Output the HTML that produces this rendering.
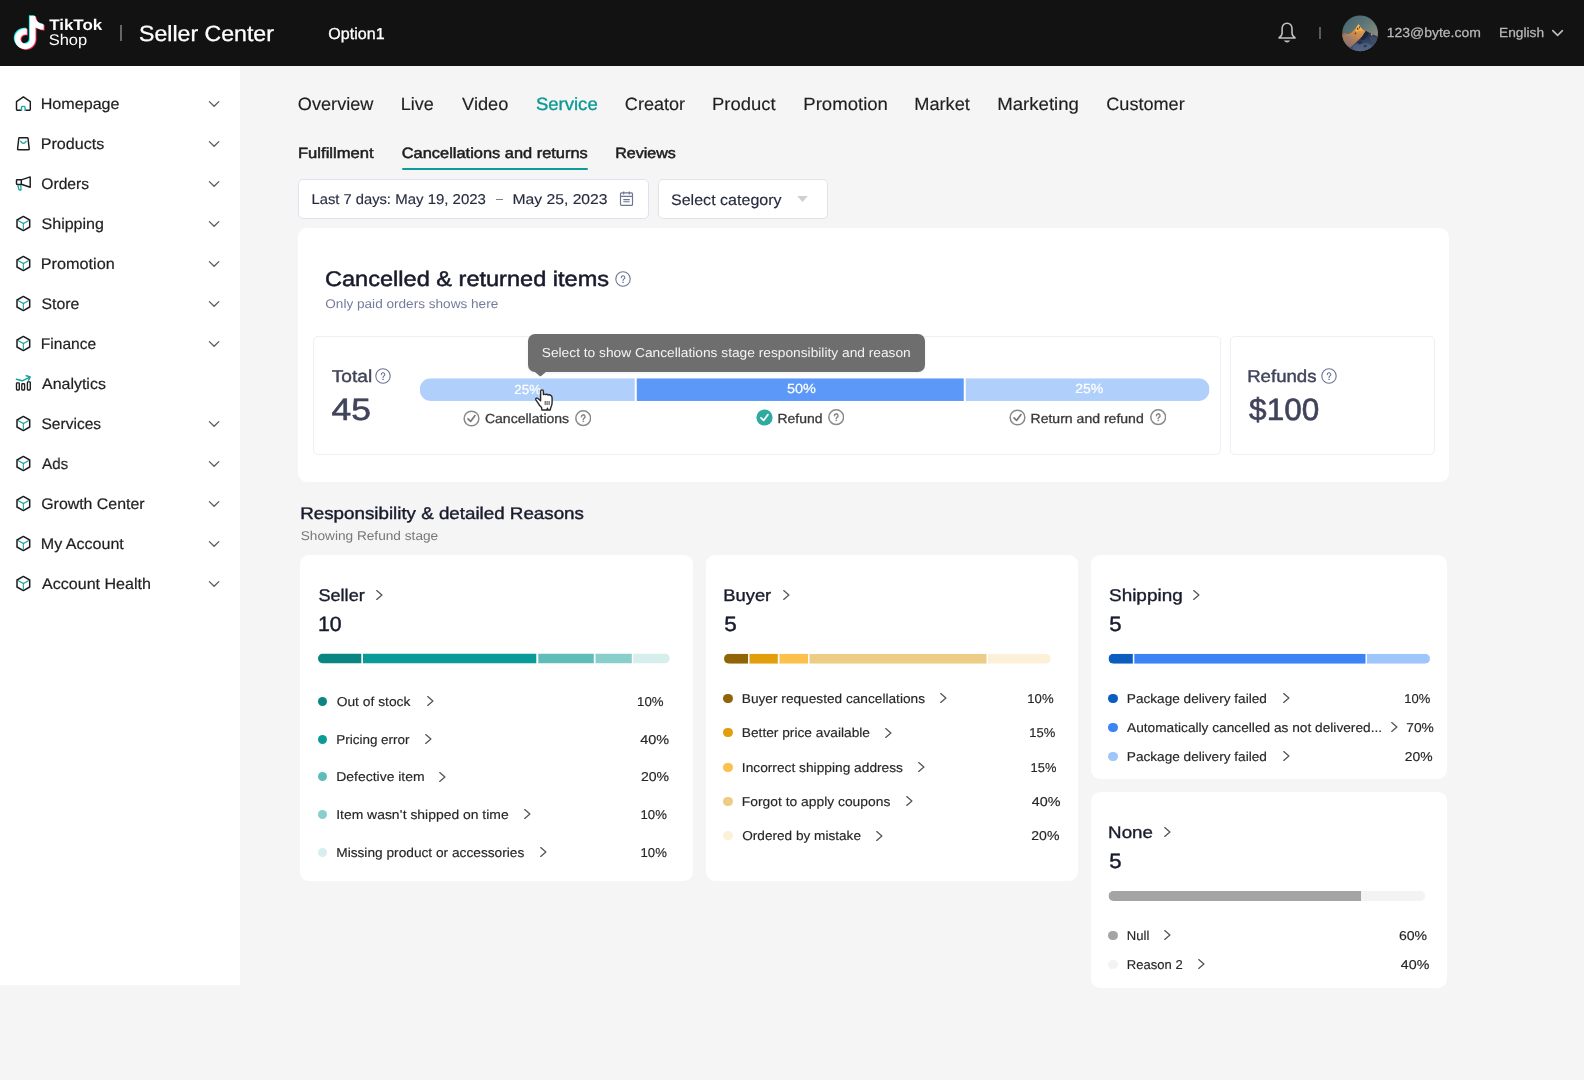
<!DOCTYPE html>
<html lang="en"><head><meta charset="utf-8"><title>Seller Center</title>
<style>
html,body{margin:0;padding:0}
body{width:1584px;height:1080px;position:relative;overflow:hidden;background:#f5f5f5;font-family:"Liberation Sans",sans-serif;text-rendering:geometricPrecision;}
body div,body svg{position:absolute}
.t{position:absolute;white-space:nowrap;line-height:1;will-change:transform;}
</style></head>
<body>
<div style="left:0px;top:0px;width:1584px;height:66px;background:#121212;"></div>
<div style="left:0px;top:66px;width:240px;height:919px;background:#ffffff;"></div>
<svg style="left:10px;top:12px" width="40" height="42" viewBox="0 0 40 42">
<g transform="translate(2.6,4) scale(1.383)"><path d="M12.525.02c1.31-.02 2.61-.01 3.91-.02.08 1.53.63 3.09 1.75 4.17 1.12 1.11 2.7 1.62 4.24 1.79v4.03c-1.44-.05-2.89-.35-4.2-.97-.57-.26-1.1-.59-1.62-.93-.01 2.92.01 5.84-.02 8.75-.08 1.4-.54 2.79-1.35 3.94-1.31 1.92-3.58 3.17-5.91 3.21-1.43.08-2.86-.31-4.08-1.03-2.02-1.19-3.44-3.37-3.65-5.71-.02-.5-.03-1-.01-1.49.18-1.9 1.12-3.72 2.58-4.96 1.66-1.44 3.98-2.13 6.15-1.72.02 1.48-.04 2.96-.04 4.44-.99-.32-2.15-.23-3.02.37-.63.41-1.11 1.04-1.36 1.75-.21.51-.15 1.07-.14 1.61.24 1.64 1.82 3.02 3.5 2.87 1.12-.01 2.19-.66 2.77-1.61.19-.33.4-.67.41-1.06.1-1.79.06-3.57.07-5.36.01-4.03-.01-8.05.02-12.07z" fill="#25f4ee" transform="translate(-0.7,-0.55)"/><path d="M12.525.02c1.31-.02 2.61-.01 3.91-.02.08 1.53.63 3.09 1.75 4.17 1.12 1.11 2.7 1.62 4.24 1.79v4.03c-1.44-.05-2.89-.35-4.2-.97-.57-.26-1.1-.59-1.62-.93-.01 2.92.01 5.84-.02 8.75-.08 1.4-.54 2.79-1.35 3.94-1.31 1.92-3.58 3.17-5.91 3.21-1.43.08-2.86-.31-4.08-1.03-2.02-1.19-3.44-3.37-3.65-5.71-.02-.5-.03-1-.01-1.49.18-1.9 1.12-3.72 2.58-4.96 1.66-1.44 3.98-2.13 6.15-1.72.02 1.48-.04 2.96-.04 4.44-.99-.32-2.15-.23-3.02.37-.63.41-1.11 1.04-1.36 1.75-.21.51-.15 1.07-.14 1.61.24 1.64 1.82 3.02 3.5 2.87 1.12-.01 2.19-.66 2.77-1.61.19-.33.4-.67.41-1.06.1-1.79.06-3.57.07-5.36.01-4.03-.01-8.05.02-12.07z" fill="#fe2c55" transform="translate(0.7,0.55)"/><path d="M12.525.02c1.31-.02 2.61-.01 3.91-.02.08 1.53.63 3.09 1.75 4.17 1.12 1.11 2.7 1.62 4.24 1.79v4.03c-1.44-.05-2.89-.35-4.2-.97-.57-.26-1.1-.59-1.62-.93-.01 2.92.01 5.84-.02 8.75-.08 1.4-.54 2.79-1.35 3.94-1.31 1.92-3.58 3.17-5.91 3.21-1.43.08-2.86-.31-4.08-1.03-2.02-1.19-3.44-3.37-3.65-5.71-.02-.5-.03-1-.01-1.49.18-1.9 1.12-3.72 2.58-4.96 1.66-1.44 3.98-2.13 6.15-1.72.02 1.48-.04 2.96-.04 4.44-.99-.32-2.15-.23-3.02.37-.63.41-1.11 1.04-1.36 1.75-.21.51-.15 1.07-.14 1.61.24 1.64 1.82 3.02 3.5 2.87 1.12-.01 2.19-.66 2.77-1.61.19-.33.4-.67.41-1.06.1-1.79.06-3.57.07-5.36.01-4.03-.01-8.05.02-12.07z" fill="#ffffff"/></g></svg>
<div style="left:120px;top:24.5px;width:1.6px;height:16.5px;background:#666;"></div>
<svg style="left:1276px;top:21px" width="22" height="24" viewBox="0 0 22 24" fill="none" stroke="#c2c2c2" stroke-width="1.55" stroke-linejoin="round">
<path d="M11.05 2.3 C8 2.3 6.1 4.5 6.1 7.5 V12 C6.1 14 5.2 15.4 3 16.9 H19.1 C16.9 15.4 16 14 16 12 V7.5 C16 4.5 14.1 2.3 11.05 2.3Z"/><path d="M7.7 19.5 H14.4 Q11.05 23.6 7.7 19.5Z" fill="#c2c2c2" stroke="none"/></svg>
<div style="left:1319px;top:26.8px;width:2px;height:12px;background:#5a5a5a;"></div>
<svg style="left:1342px;top:14.5px" width="37" height="37" viewBox="0 0 37 37">
<defs><clipPath id="av"><circle cx="18.1" cy="18.3" r="17.9"/></clipPath>
<linearGradient id="sky" x1="0.15" y1="0" x2="0.75" y2="0.65"><stop offset="0" stop-color="#476570"/><stop offset="0.5" stop-color="#5a7478"/><stop offset="1" stop-color="#858b7c"/></linearGradient>
<linearGradient id="sun" x1="0.75" y1="0" x2="0.2" y2="1"><stop offset="0" stop-color="#eeaa4c"/><stop offset="0.35" stop-color="#cf8e4c"/><stop offset="0.7" stop-color="#a87a60"/><stop offset="1" stop-color="#7a6a6c"/></linearGradient>
<linearGradient id="shd" x1="0.3" y1="0" x2="0.45" y2="1"><stop offset="0" stop-color="#162038"/><stop offset="0.5" stop-color="#2a3855"/><stop offset="1" stop-color="#52647f"/></linearGradient>
<filter id="bl" x="-10%" y="-10%" width="120%" height="120%"><feGaussianBlur stdDeviation="0.45"/></filter></defs>
<g clip-path="url(#av)"><rect width="37" height="37" fill="url(#sky)"/>
<g filter="url(#bl)">
<path d="M-1 20 L0.3 19.4 L2.4 17.9 L4.6 18.9 L6.6 18.7 L9.2 17.6 L11.6 15.2 L13.9 12.5 L16.4 9.3 L17.7 10.6 L19 12.5 L21.2 14.4 L23.7 15.9 L26.4 17.3 L29.2 18.5 L31.6 19.8 L34.3 21.1 L38 22.4 V38 H-1Z" fill="url(#shd)"/>
<path d="M-1 20 L0.3 19.4 L2.4 17.9 L4.6 18.9 L6.6 18.7 L9.2 17.6 L11.6 15.2 L13.9 12.5 L16.4 9.3 L17.7 10.6 L19 12.5 L21.2 14.4 L23.7 15.9 L21.8 18.8 L19.9 21.9 L17 24.6 L14.3 27 L12 29.2 L10.1 30.9 L8.4 32.6 L3 30 L-1 26Z" fill="url(#sun)"/>
<path d="M16.4 9.3 L17.7 10.6 L18.6 12.4 L20.4 14.2 L19.6 16.2 L17.2 15.4 L15 17 L13.6 15 L14.6 12Z" fill="#f2b656"/>
<path d="M15.2 12.6 L16.6 13.2 L16.2 15 L14.9 14.6Z M17 11 L18 12 L17.8 13.6 L17 13Z M13 17.4 L14.4 17.8 L13.8 19.6 L12.6 19Z" fill="#5b3f28"/>
<path d="M3.6 21.6 L7.4 21.8 L7.8 23.6 L4.4 24.2Z M7.6 24.6 L10.4 24.4 L10 26.4 L7.8 26.6Z" fill="#7d8094" opacity="0.8"/>
<path d="M0 19.6 L2.4 18 L4.4 19 L4 21 L0.5 22Z" fill="#a27250" opacity="0.8"/>
<path d="M23.7 15.9 L26.4 17.3 L25.6 21 L22.4 24.4 L19.4 25.4 L18.4 23.4 L21 20.4Z" fill="#18233b" opacity="0.8"/>
<path d="M29 18.5 L30.6 19.2 L30.4 20.6 L28.8 20.2Z" fill="#dfa56a"/>
<path d="M27 22 L31 21 L35 23 L34 27 L29 27Z" fill="#43536f" opacity="0.7"/>
<path d="M11 31 L15 28.4 L19 29.6 L24 28 L29 30 L30 38 H12Z" fill="#56688a" opacity="0.7"/>
<path d="M15 27 L18.6 25.6 L20.6 27.4 L17.4 29.4Z M21.4 30.4 L24.4 29.6 L25 31.6 L22.4 32.4Z" fill="#1e2a44" opacity="0.7"/>
</g></g></svg>
<svg style="left:1550px;top:28px" width="15" height="10" viewBox="0 0 15 10" fill="none" stroke="#bdbdbd" stroke-width="1.6" stroke-linecap="round" stroke-linejoin="round"><path d="M2.8 2.6 L7.6 7.4 L12.4 2.6"/></svg>
<svg style="left:15px;top:95px" width="18" height="18" viewBox="0 0 18 18"><path d="M1.5 6.6 L8.4 1.9 L15.3 6.6 V14.6 Q15.3 15.3 14.6 15.3 H10.9 M5.9 15.3 H2.2 Q1.5 15.3 1.5 14.6 V6.6" stroke="#1d1d1d" stroke-width="1.45" stroke-linejoin="round" stroke-linecap="round" fill="none"/><path d="M6.5 15.9 V12.4 Q6.5 11.4 7.5 11.4 H9.1 Q10.1 11.4 10.1 12.4 V15.9" stroke="#1aa3a0" stroke-width="1.35" fill="none"/></svg>
<svg style="left:207px;top:99px" width="14" height="10" viewBox="0 0 14 10" fill="none" stroke="#5a5a5a" stroke-width="1.3" stroke-linecap="round" stroke-linejoin="round"><path d="M2.4 2.6 L7.1 7.3 L11.8 2.6"/></svg>
<svg style="left:15px;top:135px" width="18" height="18" viewBox="0 0 18 18"><path d="M4.5 2.8 H12.3 Q12.9 2.8 13 3.4 L14.2 13.9 Q14.3 14.7 13.5 14.7 H3.3 Q2.5 14.7 2.6 13.9 L3.8 3.4 Q3.9 2.8 4.5 2.8Z" stroke="#1d1d1d" stroke-width="1.45" stroke-linejoin="round" fill="none"/><path d="M5.8 6.3 Q8.4 10.4 11 6.3" stroke="#1aa3a0" stroke-width="1.4" stroke-linecap="round" fill="none"/></svg>
<svg style="left:207px;top:139px" width="14" height="10" viewBox="0 0 14 10" fill="none" stroke="#5a5a5a" stroke-width="1.3" stroke-linecap="round" stroke-linejoin="round"><path d="M2.4 2.6 L7.1 7.3 L11.8 2.6"/></svg>
<svg style="left:15px;top:175px" width="18" height="18" viewBox="0 0 18 18"><path d="M6.3 4.9 L15.2 1.9 V12.3 L6.3 9.3 M6.3 4.7 H2.2 Q1.5 4.7 1.5 5.4 V8.7 Q1.5 9.4 2.2 9.4 H6.3Z" stroke="#1d1d1d" stroke-width="1.45" stroke-linejoin="round" fill="none"/><path d="M2.9 10 L3.8 14.4 Q3.9 15 4.5 15 H5.5 Q6.2 15 6.1 14.3 L5.7 10" stroke="#1aa3a0" stroke-width="1.3" fill="none"/></svg>
<svg style="left:207px;top:179px" width="14" height="10" viewBox="0 0 14 10" fill="none" stroke="#5a5a5a" stroke-width="1.3" stroke-linecap="round" stroke-linejoin="round"><path d="M2.4 2.6 L7.1 7.3 L11.8 2.6"/></svg>
<svg style="left:15px;top:215px" width="18" height="18" viewBox="0 0 18 18"><path d="M8.35 1.4 L14.7 5 V12 L8.35 15.6 L2 12 V5Z" stroke="#1d1d1d" stroke-width="1.5" stroke-linejoin="round" fill="none"/><path d="M2.9 5.5 L8.35 8.5 L13.8 5.5 M8.35 8.5 V15" stroke="#1aa3a0" stroke-width="1.1" fill="none"/></svg>
<svg style="left:207px;top:219px" width="14" height="10" viewBox="0 0 14 10" fill="none" stroke="#5a5a5a" stroke-width="1.3" stroke-linecap="round" stroke-linejoin="round"><path d="M2.4 2.6 L7.1 7.3 L11.8 2.6"/></svg>
<svg style="left:15px;top:255px" width="18" height="18" viewBox="0 0 18 18"><path d="M8.35 1.4 L14.7 5 V12 L8.35 15.6 L2 12 V5Z" stroke="#1d1d1d" stroke-width="1.5" stroke-linejoin="round" fill="none"/><path d="M2.9 5.5 L8.35 8.5 L13.8 5.5 M8.35 8.5 V15" stroke="#1aa3a0" stroke-width="1.1" fill="none"/></svg>
<svg style="left:207px;top:259px" width="14" height="10" viewBox="0 0 14 10" fill="none" stroke="#5a5a5a" stroke-width="1.3" stroke-linecap="round" stroke-linejoin="round"><path d="M2.4 2.6 L7.1 7.3 L11.8 2.6"/></svg>
<svg style="left:15px;top:295px" width="18" height="18" viewBox="0 0 18 18"><path d="M8.35 1.4 L14.7 5 V12 L8.35 15.6 L2 12 V5Z" stroke="#1d1d1d" stroke-width="1.5" stroke-linejoin="round" fill="none"/><path d="M2.9 5.5 L8.35 8.5 L13.8 5.5 M8.35 8.5 V15" stroke="#1aa3a0" stroke-width="1.1" fill="none"/></svg>
<svg style="left:207px;top:299px" width="14" height="10" viewBox="0 0 14 10" fill="none" stroke="#5a5a5a" stroke-width="1.3" stroke-linecap="round" stroke-linejoin="round"><path d="M2.4 2.6 L7.1 7.3 L11.8 2.6"/></svg>
<svg style="left:15px;top:335px" width="18" height="18" viewBox="0 0 18 18"><path d="M8.35 1.4 L14.7 5 V12 L8.35 15.6 L2 12 V5Z" stroke="#1d1d1d" stroke-width="1.5" stroke-linejoin="round" fill="none"/><path d="M2.9 5.5 L8.35 8.5 L13.8 5.5 M8.35 8.5 V15" stroke="#1aa3a0" stroke-width="1.1" fill="none"/></svg>
<svg style="left:207px;top:339px" width="14" height="10" viewBox="0 0 14 10" fill="none" stroke="#5a5a5a" stroke-width="1.3" stroke-linecap="round" stroke-linejoin="round"><path d="M2.4 2.6 L7.1 7.3 L11.8 2.6"/></svg>
<svg style="left:15px;top:375px" width="18" height="18" viewBox="0 0 18 18"><rect x="1.5" y="7.9" width="2.8" height="7.1" rx="0.7" stroke="#1d1d1d" stroke-width="1.35" fill="none"/><rect x="6.8" y="8.7" width="2.8" height="6.3" rx="0.7" stroke="#1d1d1d" stroke-width="1.35" fill="none"/><rect x="12.4" y="6.8" width="2.9" height="8.2" rx="0.7" stroke="#1d1d1d" stroke-width="1.35" fill="none"/><path d="M1.5 4.3 L7.2 5.8 L14.4 2.3 M11.3 0.7 L15.2 1.9 L13.6 5.3" stroke="#14a09c" stroke-width="1.5" stroke-linecap="round" stroke-linejoin="round" fill="none"/></svg>
<svg style="left:15px;top:415px" width="18" height="18" viewBox="0 0 18 18"><path d="M8.35 1.4 L14.7 5 V12 L8.35 15.6 L2 12 V5Z" stroke="#1d1d1d" stroke-width="1.5" stroke-linejoin="round" fill="none"/><path d="M2.9 5.5 L8.35 8.5 L13.8 5.5 M8.35 8.5 V15" stroke="#1aa3a0" stroke-width="1.1" fill="none"/></svg>
<svg style="left:207px;top:419px" width="14" height="10" viewBox="0 0 14 10" fill="none" stroke="#5a5a5a" stroke-width="1.3" stroke-linecap="round" stroke-linejoin="round"><path d="M2.4 2.6 L7.1 7.3 L11.8 2.6"/></svg>
<svg style="left:15px;top:455px" width="18" height="18" viewBox="0 0 18 18"><path d="M8.35 1.4 L14.7 5 V12 L8.35 15.6 L2 12 V5Z" stroke="#1d1d1d" stroke-width="1.5" stroke-linejoin="round" fill="none"/><path d="M2.9 5.5 L8.35 8.5 L13.8 5.5 M8.35 8.5 V15" stroke="#1aa3a0" stroke-width="1.1" fill="none"/></svg>
<svg style="left:207px;top:459px" width="14" height="10" viewBox="0 0 14 10" fill="none" stroke="#5a5a5a" stroke-width="1.3" stroke-linecap="round" stroke-linejoin="round"><path d="M2.4 2.6 L7.1 7.3 L11.8 2.6"/></svg>
<svg style="left:15px;top:495px" width="18" height="18" viewBox="0 0 18 18"><path d="M8.35 1.4 L14.7 5 V12 L8.35 15.6 L2 12 V5Z" stroke="#1d1d1d" stroke-width="1.5" stroke-linejoin="round" fill="none"/><path d="M2.9 5.5 L8.35 8.5 L13.8 5.5 M8.35 8.5 V15" stroke="#1aa3a0" stroke-width="1.1" fill="none"/></svg>
<svg style="left:207px;top:499px" width="14" height="10" viewBox="0 0 14 10" fill="none" stroke="#5a5a5a" stroke-width="1.3" stroke-linecap="round" stroke-linejoin="round"><path d="M2.4 2.6 L7.1 7.3 L11.8 2.6"/></svg>
<svg style="left:15px;top:535px" width="18" height="18" viewBox="0 0 18 18"><path d="M8.35 1.4 L14.7 5 V12 L8.35 15.6 L2 12 V5Z" stroke="#1d1d1d" stroke-width="1.5" stroke-linejoin="round" fill="none"/><path d="M2.9 5.5 L8.35 8.5 L13.8 5.5 M8.35 8.5 V15" stroke="#1aa3a0" stroke-width="1.1" fill="none"/></svg>
<svg style="left:207px;top:539px" width="14" height="10" viewBox="0 0 14 10" fill="none" stroke="#5a5a5a" stroke-width="1.3" stroke-linecap="round" stroke-linejoin="round"><path d="M2.4 2.6 L7.1 7.3 L11.8 2.6"/></svg>
<svg style="left:15px;top:575px" width="18" height="18" viewBox="0 0 18 18"><path d="M8.35 1.4 L14.7 5 V12 L8.35 15.6 L2 12 V5Z" stroke="#1d1d1d" stroke-width="1.5" stroke-linejoin="round" fill="none"/><path d="M2.9 5.5 L8.35 8.5 L13.8 5.5 M8.35 8.5 V15" stroke="#1aa3a0" stroke-width="1.1" fill="none"/></svg>
<svg style="left:207px;top:579px" width="14" height="10" viewBox="0 0 14 10" fill="none" stroke="#5a5a5a" stroke-width="1.3" stroke-linecap="round" stroke-linejoin="round"><path d="M2.4 2.6 L7.1 7.3 L11.8 2.6"/></svg>
<div style="left:401.6px;top:167.8px;width:186.8px;height:2.4px;background:#0f9c97;border-radius:1.2px;"></div>
<div style="left:298px;top:179px;width:349px;height:38px;background:#fff;border:1px solid #dde2f0;border-radius:5px;"></div>
<div style="left:496.2px;top:198.6px;width:7.2px;height:1.2px;background:#7a7f92;"></div>
<svg style="left:619px;top:189.8px" width="15" height="17" viewBox="0 0 15 17" fill="none" stroke="#6f7590" stroke-width="1.15"><rect x="1.5" y="2.9" width="12" height="12.5" rx="1"/><path d="M4.7 1.4 V4.4 M10.3 1.4 V4.4 M1.5 6.4 H13.5 M4.3 9.6 H10.7 M4.3 11.7 H10.7"/></svg>
<div style="left:658px;top:179px;width:167.5px;height:38px;background:#fff;border:1px solid #e3e3e6;border-radius:5px;"></div>
<svg style="left:796px;top:195px" width="13" height="8" viewBox="0 0 13 8"><path d="M1.2 1.1 H11.8 L6.5 7Z" fill="#cfcfd2"/></svg>
<div style="left:298px;top:228px;width:1151px;height:253.5px;background:#fff;border-radius:9px;"></div>
<svg style="left:615.3px;top:271.0px" width="16" height="16" viewBox="0 0 16 16" fill="none" stroke="#6d7396" stroke-width="1.1" stroke-linecap="round"><circle cx="8" cy="8" r="7.2"/><path d="M6.3 6.6 A1.75 1.75 0 1 1 8.8 8.1 Q8 8.6 8 9.5" stroke-width="1.1"/><circle cx="8" cy="11.3" r="0.5" fill="#6d7396" stroke-width="0.45"/></svg>
<div style="left:313px;top:336px;width:906px;height:116.5px;background:#fff;border:1px solid #eeeff5;border-radius:5px;"></div>
<div style="left:1230px;top:336px;width:202.5px;height:116.5px;background:#fff;border:1px solid #eeeff5;border-radius:5px;"></div>
<svg style="left:375.3px;top:367.8px" width="16" height="16" viewBox="0 0 16 16" fill="none" stroke="#6d7396" stroke-width="1.1" stroke-linecap="round"><circle cx="8" cy="8" r="7.2"/><path d="M6.3 6.6 A1.75 1.75 0 1 1 8.8 8.1 Q8 8.6 8 9.5" stroke-width="1.1"/><circle cx="8" cy="11.3" r="0.5" fill="#6d7396" stroke-width="0.45"/></svg>
<svg style="left:1320.8px;top:367.8px" width="16" height="16" viewBox="0 0 16 16" fill="none" stroke="#6d7396" stroke-width="1.1" stroke-linecap="round"><circle cx="8" cy="8" r="7.2"/><path d="M6.3 6.6 A1.75 1.75 0 1 1 8.8 8.1 Q8 8.6 8 9.5" stroke-width="1.1"/><circle cx="8" cy="11.3" r="0.5" fill="#6d7396" stroke-width="0.45"/></svg>
<svg style="left:418px;top:377px" width="793" height="25" viewBox="0 0 793 25"><defs><clipPath id="bc1"><rect x="1.75" y="1.25" width="789.75" height="22.7" rx="11.1"/></clipPath></defs><g clip-path="url(#bc1)"><rect x="1.75" y="1.25" width="215.00" height="22.7" fill="#b0d0fb"/><rect x="218.75" y="1.25" width="327.00" height="22.7" fill="#5c98f8"/><rect x="547.75" y="1.25" width="243.75" height="22.7" fill="#b0d0fb"/></g></svg>
<svg style="left:462.6px;top:410.4px" width="17" height="17" viewBox="0 0 17 17" fill="none" stroke="#8a8a8a" stroke-width="1.5" stroke-linecap="round" stroke-linejoin="round"><circle cx="8.5" cy="8.5" r="7.35"/><path d="M5 8.8 L7.6 11.4 L12 5.6" stroke="#787878" stroke-width="1.7"/></svg>
<svg style="left:574.8px;top:410.3px" width="16.4" height="16.4" viewBox="0 0 16 16" fill="none" stroke="#8a8a8a" stroke-width="1.5" stroke-linecap="round"><circle cx="8" cy="8" r="7.2"/><path d="M6.3 6.6 A1.75 1.75 0 1 1 8.8 8.1 Q8 8.6 8 9.5" stroke-width="1.5"/><circle cx="8" cy="11.3" r="0.5" fill="#8a8a8a" stroke-width="0.45"/></svg>
<svg style="left:755.7px;top:408.9px" width="17" height="17" viewBox="0 0 17 17" fill="none" stroke-linecap="round" stroke-linejoin="round"><circle cx="8.5" cy="8.5" r="8.1" fill="#30a9a1"/><path d="M5 8.8 L7.6 11.4 L12 5.6" stroke="#fff" stroke-width="1.7"/></svg>
<svg style="left:828.1px;top:409.2px" width="16.4" height="16.4" viewBox="0 0 16 16" fill="none" stroke="#8a8a8a" stroke-width="1.5" stroke-linecap="round"><circle cx="8" cy="8" r="7.2"/><path d="M6.3 6.6 A1.75 1.75 0 1 1 8.8 8.1 Q8 8.6 8 9.5" stroke-width="1.5"/><circle cx="8" cy="11.3" r="0.5" fill="#8a8a8a" stroke-width="0.45"/></svg>
<svg style="left:1008.6px;top:409.4px" width="17" height="17" viewBox="0 0 17 17" fill="none" stroke="#8a8a8a" stroke-width="1.5" stroke-linecap="round" stroke-linejoin="round"><circle cx="8.5" cy="8.5" r="7.35"/><path d="M5 8.8 L7.6 11.4 L12 5.6" stroke="#787878" stroke-width="1.7"/></svg>
<svg style="left:1149.8px;top:409.2px" width="16.4" height="16.4" viewBox="0 0 16 16" fill="none" stroke="#8a8a8a" stroke-width="1.5" stroke-linecap="round"><circle cx="8" cy="8" r="7.2"/><path d="M6.3 6.6 A1.75 1.75 0 1 1 8.8 8.1 Q8 8.6 8 9.5" stroke-width="1.5"/><circle cx="8" cy="11.3" r="0.5" fill="#8a8a8a" stroke-width="0.45"/></svg>
<div style="left:528px;top:334.4px;width:396.6px;height:37.2px;background:#6e6e6e;border-radius:7px;box-shadow:0 1px 3px rgba(0,0,0,0.07);"></div>
<svg style="left:533px;top:371px" width="15" height="7" viewBox="0 0 15 7"><path d="M0.8 0 H14 L8.2 5 Q7.4 5.6 6.6 5Z" fill="#6e6e6e"/></svg>
<svg style="left:533px;top:388px;z-index:3" width="23" height="25" viewBox="0 0 23 25"><path d="M7.6 3.3 Q7.6 1.9 9 1.9 Q10.4 1.9 10.4 3.3 V6.6 Q11.6 5.6 12.8 6.6 Q14 5.9 15.2 7 Q16.6 6.4 17.8 7.4 Q19.1 8.3 19.1 10 V14.5 Q19.1 17 18 19 L17.1 22 H14.9 L14.45 20.3 L14 22 H8.9 L8.6 19.6 Q6.4 17.6 4.6 14.4 L2.9 11.8 Q2.3 10.6 3.4 10.2 Q4.6 9.9 5.6 10.9 L7.6 12.8Z" fill="#fff" stroke="#2a2a2a" stroke-width="1.4" stroke-linejoin="round"/><path d="M12.2 12.9 V16.9 M14.1 12.9 V16.9 M16.1 12.9 V16.9" stroke="#555" stroke-width="1.1"/></svg>
<div style="left:300.4px;top:555px;width:392.6px;height:325.6px;background:#fff;border-radius:9px;"></div>
<svg style="left:374.2px;top:587.9px" width="11" height="14" viewBox="0 0 11 14" fill="none" stroke="#555" stroke-width="1.3" stroke-linecap="round" stroke-linejoin="round"><path d="M2.7 2.6 L7.9 7 L2.7 11.4"/></svg>
<svg style="left:317px;top:652px" width="354" height="13" viewBox="0 0 354 13"><defs><clipPath id="bc2"><rect x="1.00" y="1.50" width="351.80" height="10" rx="5"/></clipPath></defs><g clip-path="url(#bc2)"><rect x="1.00" y="1.50" width="43.30" height="10" fill="#0b8582"/><rect x="46.00" y="1.50" width="173.30" height="10" fill="#0a9b98"/><rect x="221.30" y="1.50" width="55.50" height="10" fill="#5fbdb9"/><rect x="278.50" y="1.50" width="36.30" height="10" fill="#88cfcb"/><rect x="316.30" y="1.50" width="36.50" height="10" fill="#d6efed"/></g></svg>
<div style="left:317.79999999999995px;top:696.8px;width:9.2px;height:9.2px;background:#0b8582;border-radius:50%;"></div>
<svg style="left:425.2px;top:694.4px" width="11" height="14" viewBox="0 0 11 14" fill="none" stroke="#555" stroke-width="1.3" stroke-linecap="round" stroke-linejoin="round"><path d="M2.7 2.6 L7.9 7 L2.7 11.4"/></svg>
<div style="left:317.79999999999995px;top:734.5999999999999px;width:9.2px;height:9.2px;background:#0a9b98;border-radius:50%;"></div>
<svg style="left:423.2px;top:732.1999999999999px" width="11" height="14" viewBox="0 0 11 14" fill="none" stroke="#555" stroke-width="1.3" stroke-linecap="round" stroke-linejoin="round"><path d="M2.7 2.6 L7.9 7 L2.7 11.4"/></svg>
<div style="left:317.79999999999995px;top:772.0999999999999px;width:9.2px;height:9.2px;background:#5fbdb9;border-radius:50%;"></div>
<svg style="left:437.4px;top:769.6999999999999px" width="11" height="14" viewBox="0 0 11 14" fill="none" stroke="#555" stroke-width="1.3" stroke-linecap="round" stroke-linejoin="round"><path d="M2.7 2.6 L7.9 7 L2.7 11.4"/></svg>
<div style="left:317.79999999999995px;top:809.8px;width:9.2px;height:9.2px;background:#88cfcb;border-radius:50%;"></div>
<svg style="left:521.7px;top:807.4px" width="11" height="14" viewBox="0 0 11 14" fill="none" stroke="#555" stroke-width="1.3" stroke-linecap="round" stroke-linejoin="round"><path d="M2.7 2.6 L7.9 7 L2.7 11.4"/></svg>
<div style="left:317.79999999999995px;top:847.5999999999999px;width:9.2px;height:9.2px;background:#d6efed;border-radius:50%;"></div>
<svg style="left:538.2px;top:845.1999999999999px" width="11" height="14" viewBox="0 0 11 14" fill="none" stroke="#555" stroke-width="1.3" stroke-linecap="round" stroke-linejoin="round"><path d="M2.7 2.6 L7.9 7 L2.7 11.4"/></svg>
<div style="left:706px;top:555px;width:371.8px;height:325.8px;background:#fff;border-radius:9px;"></div>
<svg style="left:781.2px;top:587.9px" width="11" height="14" viewBox="0 0 11 14" fill="none" stroke="#555" stroke-width="1.3" stroke-linecap="round" stroke-linejoin="round"><path d="M2.7 2.6 L7.9 7 L2.7 11.4"/></svg>
<svg style="left:723px;top:652px" width="329" height="13" viewBox="0 0 329 13"><defs><clipPath id="bc3"><rect x="1.00" y="1.75" width="326.80" height="10" rx="5"/></clipPath></defs><g clip-path="url(#bc3)"><rect x="1.00" y="1.75" width="24.00" height="10" fill="#8f6508"/><rect x="26.50" y="1.75" width="28.30" height="10" fill="#e29e0d"/><rect x="56.50" y="1.75" width="28.50" height="10" fill="#fdc04d"/><rect x="86.50" y="1.75" width="177.00" height="10" fill="#edcd85"/><rect x="265.00" y="1.75" width="62.80" height="10" fill="#fdf0d9"/></g></svg>
<div style="left:723.4px;top:693.8px;width:9.2px;height:9.2px;background:#8f6508;border-radius:50%;"></div>
<svg style="left:938.4px;top:691.4px" width="11" height="14" viewBox="0 0 11 14" fill="none" stroke="#555" stroke-width="1.3" stroke-linecap="round" stroke-linejoin="round"><path d="M2.7 2.6 L7.9 7 L2.7 11.4"/></svg>
<div style="left:723.4px;top:728.0px;width:9.2px;height:9.2px;background:#e29e0d;border-radius:50%;"></div>
<svg style="left:882.9px;top:725.6px" width="11" height="14" viewBox="0 0 11 14" fill="none" stroke="#555" stroke-width="1.3" stroke-linecap="round" stroke-linejoin="round"><path d="M2.7 2.6 L7.9 7 L2.7 11.4"/></svg>
<div style="left:723.4px;top:762.5999999999999px;width:9.2px;height:9.2px;background:#fdc04d;border-radius:50%;"></div>
<svg style="left:915.9px;top:760.1999999999999px" width="11" height="14" viewBox="0 0 11 14" fill="none" stroke="#555" stroke-width="1.3" stroke-linecap="round" stroke-linejoin="round"><path d="M2.7 2.6 L7.9 7 L2.7 11.4"/></svg>
<div style="left:723.4px;top:796.8px;width:9.2px;height:9.2px;background:#edcd85;border-radius:50%;"></div>
<svg style="left:903.7px;top:794.4px" width="11" height="14" viewBox="0 0 11 14" fill="none" stroke="#555" stroke-width="1.3" stroke-linecap="round" stroke-linejoin="round"><path d="M2.7 2.6 L7.9 7 L2.7 11.4"/></svg>
<div style="left:723.4px;top:831.1999999999999px;width:9.2px;height:9.2px;background:#fdf0d9;border-radius:50%;"></div>
<svg style="left:873.9px;top:828.8px" width="11" height="14" viewBox="0 0 11 14" fill="none" stroke="#555" stroke-width="1.3" stroke-linecap="round" stroke-linejoin="round"><path d="M2.7 2.6 L7.9 7 L2.7 11.4"/></svg>
<div style="left:1091px;top:555px;width:355.8px;height:223.8px;background:#fff;border-radius:9px;"></div>
<svg style="left:1191.2px;top:587.9px" width="11" height="14" viewBox="0 0 11 14" fill="none" stroke="#555" stroke-width="1.3" stroke-linecap="round" stroke-linejoin="round"><path d="M2.7 2.6 L7.9 7 L2.7 11.4"/></svg>
<svg style="left:1107px;top:652px" width="325" height="13" viewBox="0 0 325 13"><defs><clipPath id="bc4"><rect x="1.50" y="1.75" width="321.50" height="10" rx="5"/></clipPath></defs><g clip-path="url(#bc4)"><rect x="1.50" y="1.75" width="24.30" height="10" fill="#0b5dc0"/><rect x="27.30" y="1.75" width="231.20" height="10" fill="#3c83f6"/><rect x="260.00" y="1.75" width="63.00" height="10" fill="#9fc6fb"/></g></svg>
<div style="left:1108.4px;top:693.8px;width:9.2px;height:9.2px;background:#0b5dc0;border-radius:50%;"></div>
<svg style="left:1280.7px;top:691.4px" width="11" height="14" viewBox="0 0 11 14" fill="none" stroke="#555" stroke-width="1.3" stroke-linecap="round" stroke-linejoin="round"><path d="M2.7 2.6 L7.9 7 L2.7 11.4"/></svg>
<div style="left:1108.4px;top:722.8px;width:9.2px;height:9.2px;background:#3c83f6;border-radius:50%;"></div>
<svg style="left:1389.4px;top:720.4px" width="11" height="14" viewBox="0 0 11 14" fill="none" stroke="#555" stroke-width="1.3" stroke-linecap="round" stroke-linejoin="round"><path d="M2.7 2.6 L7.9 7 L2.7 11.4"/></svg>
<div style="left:1108.4px;top:751.5999999999999px;width:9.2px;height:9.2px;background:#9fc6fb;border-radius:50%;"></div>
<svg style="left:1280.7px;top:749.1999999999999px" width="11" height="14" viewBox="0 0 11 14" fill="none" stroke="#555" stroke-width="1.3" stroke-linecap="round" stroke-linejoin="round"><path d="M2.7 2.6 L7.9 7 L2.7 11.4"/></svg>
<div style="left:1091px;top:792px;width:355.8px;height:196px;background:#fff;border-radius:9px;"></div>
<svg style="left:1162.2px;top:824.9px" width="11" height="14" viewBox="0 0 11 14" fill="none" stroke="#555" stroke-width="1.3" stroke-linecap="round" stroke-linejoin="round"><path d="M2.7 2.6 L7.9 7 L2.7 11.4"/></svg>
<svg style="left:1107px;top:890px" width="320" height="13" viewBox="0 0 320 13"><defs><clipPath id="bc5"><rect x="1.50" y="1.00" width="317.00" height="10" rx="5"/></clipPath></defs><g clip-path="url(#bc5)"><rect x="1.50" y="1.00" width="252.50" height="10" fill="#a4a4a4"/><rect x="254.00" y="1.00" width="64.50" height="10" fill="#f3f3f3"/></g></svg>
<div style="left:1108.4px;top:930.8px;width:9.2px;height:9.2px;background:#a4a4a4;border-radius:50%;"></div>
<svg style="left:1162.2px;top:928.4px" width="11" height="14" viewBox="0 0 11 14" fill="none" stroke="#555" stroke-width="1.3" stroke-linecap="round" stroke-linejoin="round"><path d="M2.7 2.6 L7.9 7 L2.7 11.4"/></svg>
<div style="left:1108.4px;top:959.8px;width:9.2px;height:9.2px;background:#f3f3f3;border-radius:50%;"></div>
<svg style="left:1196.4px;top:957.4px" width="11" height="14" viewBox="0 0 11 14" fill="none" stroke="#555" stroke-width="1.3" stroke-linecap="round" stroke-linejoin="round"><path d="M2.7 2.6 L7.9 7 L2.7 11.4"/></svg>
<span id="t0" class="t" style="left:49px;padding-left:0.20px;top:17.96px;font-size:15.4px;color:#fff;font-weight:700;transform:scaleX(1.1013);transform-origin:0.20px 50%;">TikTok</span>
<span id="t1" class="t" style="left:48px;padding-left:0.72px;top:32.96px;font-size:15.4px;color:#fff;transform:scaleX(1.07);transform-origin:1.20px 50%;">Shop</span>
<span id="t2" class="t" style="left:139px;padding-left:0.11px;top:23.38px;font-size:22.0px;color:#fff;transform:scaleX(1.0502);transform-origin:0.80px 50%;-webkit-text-stroke:0.3px #fff;">Seller Center</span>
<span id="t3" class="t" style="left:328px;padding-left:0.36px;top:26.54px;font-size:15.9px;color:#fff;transform:scaleX(1.0111);transform-origin:1.10px 50%;-webkit-text-stroke:0.3px #fff;">Option1</span>
<span id="t4" class="t" style="left:1386px;padding-left:0.77px;top:25.83px;font-size:13.2px;color:#b9b9b9;transform:scaleX(1.0587);transform-origin:1.60px 50%;-webkit-text-stroke:0.25px #b9b9b9;">123@byte.com</span>
<span id="t5" class="t" style="left:1499px;padding-left:0.07px;top:25.83px;font-size:13.2px;color:#b9b9b9;transform:scaleX(1.0404);transform-origin:1.10px 50%;-webkit-text-stroke:0.25px #b9b9b9;">English</span>
<span id="t6" class="t" style="left:40px;padding-left:0.80px;top:96.96px;font-size:15.4px;color:#1f1f1f;transform:scaleX(1.0461);transform-origin:2.00px 50%;-webkit-text-stroke:0.2px #1f1f1f;">Homepage</span>
<span id="t7" class="t" style="left:40px;padding-left:0.80px;top:136.96px;font-size:15.4px;color:#1f1f1f;transform:scaleX(1.0476);transform-origin:2.00px 50%;-webkit-text-stroke:0.2px #1f1f1f;">Products</span>
<span id="t8" class="t" style="left:41px;padding-left:0.28px;top:176.96px;font-size:15.4px;color:#1f1f1f;transform:scaleX(1.0161);transform-origin:1.00px 50%;-webkit-text-stroke:0.2px #1f1f1f;">Orders</span>
<span id="t9" class="t" style="left:41px;padding-left:0.52px;top:216.96px;font-size:15.4px;color:#1f1f1f;transform:scaleX(1.0428);transform-origin:1.00px 50%;-webkit-text-stroke:0.2px #1f1f1f;">Shipping</span>
<span id="t10" class="t" style="left:40px;padding-left:0.80px;top:256.96px;font-size:15.4px;color:#1f1f1f;transform:scaleX(1.0555);transform-origin:2.00px 50%;-webkit-text-stroke:0.2px #1f1f1f;">Promotion</span>
<span id="t11" class="t" style="left:41px;padding-left:0.52px;top:296.96px;font-size:15.4px;color:#1f1f1f;transform:scaleX(1.0279);transform-origin:1.00px 50%;-webkit-text-stroke:0.2px #1f1f1f;">Store</span>
<span id="t12" class="t" style="left:40px;padding-left:0.80px;top:336.96px;font-size:15.4px;color:#1f1f1f;transform:scaleX(1.0121);transform-origin:2.00px 50%;-webkit-text-stroke:0.2px #1f1f1f;">Finance</span>
<span id="t13" class="t" style="left:42px;padding-left:0.00px;top:376.96px;font-size:15.4px;color:#1f1f1f;transform:scaleX(1.0369);transform-origin:0.00px 50%;-webkit-text-stroke:0.2px #1f1f1f;">Analytics</span>
<span id="t14" class="t" style="left:41px;padding-left:0.52px;top:416.96px;font-size:15.4px;color:#1f1f1f;transform:scaleX(1.0088);transform-origin:1.00px 50%;-webkit-text-stroke:0.2px #1f1f1f;">Services</span>
<span id="t15" class="t" style="left:42px;padding-left:0.00px;top:456.96px;font-size:15.4px;color:#1f1f1f;transform:scaleX(0.9902);transform-origin:0.00px 50%;-webkit-text-stroke:0.2px #1f1f1f;">Ads</span>
<span id="t16" class="t" style="left:41px;padding-left:0.28px;top:496.96px;font-size:15.4px;color:#1f1f1f;transform:scaleX(1.0318);transform-origin:1.00px 50%;-webkit-text-stroke:0.2px #1f1f1f;">Growth Center</span>
<span id="t17" class="t" style="left:40px;padding-left:0.80px;top:536.96px;font-size:15.4px;color:#1f1f1f;transform:scaleX(1.0441);transform-origin:2.00px 50%;-webkit-text-stroke:0.2px #1f1f1f;">My Account</span>
<span id="t18" class="t" style="left:42px;padding-left:0.00px;top:576.96px;font-size:15.4px;color:#1f1f1f;transform:scaleX(1.0437);transform-origin:0.00px 50%;-webkit-text-stroke:0.2px #1f1f1f;">Account Health</span>
<span id="t19" class="t" style="left:297px;padding-left:0.87px;top:95.93px;font-size:17.8px;color:#1f1f1f;transform:scaleX(1.0195);transform-origin:1.70px 50%;-webkit-text-stroke:0.15px #1f1f1f;">Overview</span>
<span id="t20" class="t" style="left:400px;padding-left:0.71px;top:95.93px;font-size:17.8px;color:#1f1f1f;transform:scaleX(1.0117);transform-origin:2.10px 50%;-webkit-text-stroke:0.15px #1f1f1f;">Live</span>
<span id="t21" class="t" style="left:462px;padding-left:0.10px;top:95.93px;font-size:17.8px;color:#1f1f1f;transform:scaleX(1.0251);transform-origin:0.10px 50%;-webkit-text-stroke:0.15px #1f1f1f;">Video</span>
<span id="t22" class="t" style="left:535px;padding-left:0.94px;top:95.93px;font-size:17.8px;color:#0b9894;transform:scaleX(1.0417);transform-origin:1.50px 50%;-webkit-text-stroke:0.35px #0b9894;">Service</span>
<span id="t23" class="t" style="left:624px;padding-left:0.87px;top:95.93px;font-size:17.8px;color:#1f1f1f;transform:scaleX(1.0148);transform-origin:1.70px 50%;-webkit-text-stroke:0.15px #1f1f1f;">Creator</span>
<span id="t24" class="t" style="left:712px;padding-left:0.11px;top:95.93px;font-size:17.8px;color:#1f1f1f;transform:scaleX(1.0364);transform-origin:1.50px 50%;-webkit-text-stroke:0.15px #1f1f1f;">Product</span>
<span id="t25" class="t" style="left:803px;padding-left:0.31px;top:95.93px;font-size:17.8px;color:#1f1f1f;transform:scaleX(1.0453);transform-origin:1.70px 50%;-webkit-text-stroke:0.15px #1f1f1f;">Promotion</span>
<span id="t26" class="t" style="left:914px;padding-left:0.31px;top:95.93px;font-size:17.8px;color:#1f1f1f;transform:scaleX(1.0232);transform-origin:1.70px 50%;-webkit-text-stroke:0.15px #1f1f1f;">Market</span>
<span id="t27" class="t" style="left:997px;padding-left:0.31px;top:95.93px;font-size:17.8px;color:#1f1f1f;transform:scaleX(1.0467);transform-origin:1.70px 50%;-webkit-text-stroke:0.15px #1f1f1f;">Marketing</span>
<span id="t28" class="t" style="left:1106px;padding-left:0.27px;top:95.93px;font-size:17.8px;color:#1f1f1f;transform:scaleX(1.0179);transform-origin:1.10px 50%;-webkit-text-stroke:0.15px #1f1f1f;">Customer</span>
<span id="t29" class="t" style="left:298px;padding-left:0.14px;top:146.71px;font-size:14.9px;color:#1d1d1f;transform:scaleX(1.1141);transform-origin:1.30px 50%;-webkit-text-stroke:0.5px #1d1d1f;">Fulfillment</span>
<span id="t30" class="t" style="left:401px;padding-left:0.80px;top:147.39px;font-size:14.9px;color:#1d1d1f;transform:scaleX(1.1019);transform-origin:1.50px 50%;-webkit-text-stroke:0.5px #1d1d1f;">Cancellations and returns</span>
<span id="t31" class="t" style="left:615px;padding-left:0.34px;top:146.71px;font-size:14.9px;color:#1d1d1f;transform:scaleX(1.0773);transform-origin:1.50px 50%;-webkit-text-stroke:0.5px #1d1d1f;">Reviews</span>
<span id="t32" class="t" style="left:311px;padding-left:0.59px;top:192.98px;font-size:14.2px;color:#272b3f;transform:scaleX(1.0381);transform-origin:1.70px 50%;-webkit-text-stroke:0.15px #272b3f;">Last 7 days:</span>
<span id="t33" class="t" style="left:395px;padding-left:0.29px;top:192.98px;font-size:14.2px;color:#272b3f;transform:scaleX(1.055);transform-origin:1.40px 50%;-webkit-text-stroke:0.15px #272b3f;">May 19, 2023</span>
<span id="t34" class="t" style="left:512px;padding-left:0.59px;top:192.98px;font-size:14.2px;color:#272b3f;transform:scaleX(1.106);transform-origin:1.70px 50%;-webkit-text-stroke:0.15px #272b3f;">May 25, 2023</span>
<span id="t35" class="t" style="left:671px;padding-left:0.02px;top:193.13px;font-size:15.2px;color:#272b3f;transform:scaleX(1.0566);transform-origin:0.50px 50%;-webkit-text-stroke:0.15px #272b3f;">Select category</span>
<span id="t36" class="t" style="left:325px;padding-left:0.11px;top:269.05px;font-size:21.2px;color:#181b2c;transform:scaleX(1.1116);transform-origin:1.10px 50%;-webkit-text-stroke:0.5px #181b2c;">Cancelled &amp; returned items</span>
<span id="t37" class="t" style="left:325px;padding-left:0.35px;top:298.49px;font-size:12.6px;color:#757b9c;transform:scaleX(1.0787);transform-origin:0.90px 50%;">Only paid orders shows here</span>
<span id="t38" class="t" style="left:331px;padding-left:0.83px;top:367.70px;font-size:17.2px;color:#40445a;transform:scaleX(1.1137);transform-origin:1.10px 50%;-webkit-text-stroke:0.4px #40445a;">Total</span>
<span id="t39" class="t" style="left:331px;padding-left:0.62px;top:394.84px;font-size:30.9px;color:#40445a;transform:scaleX(1.146);transform-origin:1.10px 50%;-webkit-text-stroke:0.6px #40445a;">45</span>
<span id="t40" class="t" style="left:1247px;padding-left:0.26px;top:368.44px;font-size:17.2px;color:#40445a;transform:scaleX(1.0839);transform-origin:1.60px 50%;-webkit-text-stroke:0.4px #40445a;">Refunds</span>
<span id="t41" class="t" style="left:1249px;padding-left:0.10px;top:394.84px;font-size:30.9px;color:#40445a;transform:scaleX(1.021);transform-origin:0.10px 50%;-webkit-text-stroke:0.6px #40445a;">$100</span>
<span id="t42" class="t" style="left:514px;padding-left:0.28px;top:382.83px;font-size:13.2px;color:#fff;transform:scaleX(1.0155);transform-origin:0.90px 50%;-webkit-text-stroke:0.2px #fff;">25%</span>
<span id="t43" class="t" style="left:786px;padding-left:0.99px;top:381.83px;font-size:13.2px;color:#fff;transform:scaleX(1.0971);transform-origin:1.40px 50%;-webkit-text-stroke:0.2px #fff;">50%</span>
<span id="t44" class="t" style="left:1075px;padding-left:0.28px;top:381.83px;font-size:13.2px;color:#fff;transform:scaleX(1.0666);transform-origin:0.90px 50%;-webkit-text-stroke:0.2px #fff;">25%</span>
<span id="t45" class="t" style="left:484px;padding-left:0.99px;top:411.91px;font-size:13.1px;color:#3a3a3a;transform:scaleX(1.0706);transform-origin:1.60px 50%;-webkit-text-stroke:0.3px #3a3a3a;">Cancellations</span>
<span id="t46" class="t" style="left:777px;padding-left:0.58px;top:411.91px;font-size:13.1px;color:#3a3a3a;transform:scaleX(1.0646);transform-origin:1.60px 50%;-webkit-text-stroke:0.3px #3a3a3a;">Refund</span>
<span id="t47" class="t" style="left:1030px;padding-left:0.58px;top:411.91px;font-size:13.1px;color:#3a3a3a;transform:scaleX(1.0728);transform-origin:1.60px 50%;-webkit-text-stroke:0.3px #3a3a3a;">Return and refund</span>
<span id="t48" class="t" style="left:541px;padding-left:0.79px;top:346.00px;font-size:13.0px;color:#f4f4f4;transform:scaleX(1.0572);transform-origin:1.20px 50%;">Select to show Cancellations stage responsibility and reason</span>
<span id="t49" class="t" style="left:300px;padding-left:0.38px;top:505.69px;font-size:16.9px;color:#181b2c;transform:scaleX(1.1109);transform-origin:1.70px 50%;-webkit-text-stroke:0.4px #181b2c;">Responsibility &amp; detailed Reasons</span>
<span id="t50" class="t" style="left:300px;padding-left:0.75px;top:530.25px;font-size:12.7px;color:#777;transform:scaleX(1.0767);transform-origin:1.30px 50%;">Showing Refund stage</span>
<span id="t51" class="t" style="left:318px;padding-left:0.47px;top:587.69px;font-size:16.9px;color:#181b2c;transform:scaleX(1.0729);transform-origin:1.00px 50%;-webkit-text-stroke:0.35px #181b2c;">Seller</span>
<span id="t52" class="t" style="left:318px;padding-left:0.01px;top:614.56px;font-size:20.6px;color:#181b2c;transform:scaleX(1.0325);transform-origin:1.30px 50%;-webkit-text-stroke:0.45px #181b2c;">10</span>
<span id="t53" class="t" style="left:336px;padding-left:0.69px;top:696.08px;font-size:12.9px;color:#262626;transform:scaleX(1.0727);transform-origin:1.30px 50%;-webkit-text-stroke:0.15px #262626;">Out of stock</span>
<span id="t54" class="t" style="left:637px;padding-left:0.09px;top:696.16px;font-size:12.9px;color:#262626;transform:scaleX(1.0273);transform-origin:0.90px 50%;-webkit-text-stroke:0.15px #262626;">10%</span>
<span id="t55" class="t" style="left:336px;padding-left:0.29px;top:734.41px;font-size:12.9px;color:#262626;transform:scaleX(1.0437);transform-origin:1.30px 50%;-webkit-text-stroke:0.15px #262626;">Pricing error</span>
<span id="t56" class="t" style="left:640px;padding-left:0.20px;top:734.41px;font-size:12.9px;color:#262626;transform:scaleX(1.1215);transform-origin:0.40px 50%;-webkit-text-stroke:0.15px #262626;">40%</span>
<span id="t57" class="t" style="left:336px;padding-left:0.29px;top:771.41px;font-size:12.9px;color:#262626;transform:scaleX(1.083);transform-origin:1.30px 50%;-webkit-text-stroke:0.15px #262626;">Defective item</span>
<span id="t58" class="t" style="left:640px;padding-left:1.00px;top:771.16px;font-size:12.9px;color:#262626;transform:scaleX(1.0914);transform-origin:1.60px 50%;-webkit-text-stroke:0.15px #262626;">20%</span>
<span id="t59" class="t" style="left:336px;padding-left:0.29px;top:809.41px;font-size:12.9px;color:#262626;transform:scaleX(1.0792);transform-origin:1.30px 50%;-webkit-text-stroke:0.15px #262626;">Item wasn’t shipped on time</span>
<span id="t60" class="t" style="left:640px;padding-left:0.59px;top:809.33px;font-size:12.9px;color:#262626;transform:scaleX(1.0191);transform-origin:1.40px 50%;-webkit-text-stroke:0.15px #262626;">10%</span>
<span id="t61" class="t" style="left:336px;padding-left:0.29px;top:847.41px;font-size:12.9px;color:#262626;transform:scaleX(1.0628);transform-origin:1.30px 50%;-webkit-text-stroke:0.15px #262626;">Missing product or accessories</span>
<span id="t62" class="t" style="left:640px;padding-left:0.59px;top:847.33px;font-size:12.9px;color:#262626;transform:scaleX(1.0191);transform-origin:1.40px 50%;-webkit-text-stroke:0.15px #262626;">10%</span>
<span id="t63" class="t" style="left:723px;padding-left:0.28px;top:587.69px;font-size:16.9px;color:#181b2c;transform:scaleX(1.0902);transform-origin:1.60px 50%;-webkit-text-stroke:0.35px #181b2c;">Buyer</span>
<span id="t64" class="t" style="left:724px;padding-left:0.26px;top:614.56px;font-size:20.6px;color:#181b2c;transform:scaleX(1.0924);transform-origin:0.90px 50%;-webkit-text-stroke:0.45px #181b2c;">5</span>
<span id="t65" class="t" style="left:741px;padding-left:0.89px;top:693.16px;font-size:12.9px;color:#262626;transform:scaleX(1.0606);transform-origin:1.90px 50%;-webkit-text-stroke:0.15px #262626;">Buyer requested cancellations</span>
<span id="t66" class="t" style="left:1027px;padding-left:0.29px;top:693.41px;font-size:12.9px;color:#262626;transform:scaleX(1.0191);transform-origin:1.10px 50%;-webkit-text-stroke:0.15px #262626;">10%</span>
<span id="t67" class="t" style="left:741px;padding-left:0.89px;top:727.16px;font-size:12.9px;color:#262626;transform:scaleX(1.0645);transform-origin:1.90px 50%;-webkit-text-stroke:0.15px #262626;">Better price available</span>
<span id="t68" class="t" style="left:1029px;padding-left:0.29px;top:727.41px;font-size:12.9px;color:#262626;transform:scaleX(1.011);transform-origin:1.10px 50%;-webkit-text-stroke:0.15px #262626;">15%</span>
<span id="t69" class="t" style="left:741px;padding-left:0.89px;top:762.16px;font-size:12.9px;color:#262626;transform:scaleX(1.0661);transform-origin:1.90px 50%;-webkit-text-stroke:0.15px #262626;">Incorrect shipping address</span>
<span id="t70" class="t" style="left:1030px;padding-left:0.59px;top:762.33px;font-size:12.9px;color:#262626;transform:scaleX(0.9988);transform-origin:1.40px 50%;-webkit-text-stroke:0.15px #262626;">15%</span>
<span id="t71" class="t" style="left:741px;padding-left:0.89px;top:796.16px;font-size:12.9px;color:#262626;transform:scaleX(1.0738);transform-origin:1.90px 50%;-webkit-text-stroke:0.15px #262626;">Forgot to apply coupons</span>
<span id="t72" class="t" style="left:1031px;padding-left:0.70px;top:796.08px;font-size:12.9px;color:#262626;transform:scaleX(1.1136);transform-origin:0.90px 50%;-webkit-text-stroke:0.15px #262626;">40%</span>
<span id="t73" class="t" style="left:742px;padding-left:0.29px;top:830.41px;font-size:12.9px;color:#262626;transform:scaleX(1.0553);transform-origin:0.90px 50%;-webkit-text-stroke:0.15px #262626;">Ordered by mistake</span>
<span id="t74" class="t" style="left:1031px;padding-left:0.30px;top:830.41px;font-size:12.9px;color:#262626;transform:scaleX(1.0914);transform-origin:0.90px 50%;-webkit-text-stroke:0.15px #262626;">20%</span>
<span id="t75" class="t" style="left:1109px;padding-left:0.07px;top:587.69px;font-size:16.9px;color:#181b2c;transform:scaleX(1.1213);transform-origin:0.60px 50%;-webkit-text-stroke:0.35px #181b2c;">Shipping</span>
<span id="t76" class="t" style="left:1109px;padding-left:0.26px;top:614.56px;font-size:20.6px;color:#181b2c;transform:scaleX(1.0723);transform-origin:0.90px 50%;-webkit-text-stroke:0.45px #181b2c;">5</span>
<span id="t77" class="t" style="left:1126px;padding-left:0.89px;top:693.16px;font-size:12.9px;color:#262626;transform:scaleX(1.0563);transform-origin:1.90px 50%;-webkit-text-stroke:0.15px #262626;">Package delivery failed</span>
<span id="t78" class="t" style="left:1404px;padding-left:0.29px;top:693.41px;font-size:12.9px;color:#262626;transform:scaleX(1.011);transform-origin:1.10px 50%;-webkit-text-stroke:0.15px #262626;">10%</span>
<span id="t79" class="t" style="left:1127px;padding-left:0.00px;top:722.16px;font-size:12.9px;color:#262626;transform:scaleX(1.0626);transform-origin:0.00px 50%;-webkit-text-stroke:0.15px #262626;">Automatically cancelled as not delivered...</span>
<span id="t80" class="t" style="left:1406px;padding-left:0.30px;top:722.41px;font-size:12.9px;color:#262626;transform:scaleX(1.0713);transform-origin:0.90px 50%;-webkit-text-stroke:0.15px #262626;">70%</span>
<span id="t81" class="t" style="left:1126px;padding-left:0.89px;top:751.16px;font-size:12.9px;color:#262626;transform:scaleX(1.0563);transform-origin:1.90px 50%;-webkit-text-stroke:0.15px #262626;">Package delivery failed</span>
<span id="t82" class="t" style="left:1404px;padding-left:0.80px;top:751.08px;font-size:12.9px;color:#262626;transform:scaleX(1.0793);transform-origin:1.40px 50%;-webkit-text-stroke:0.15px #262626;">20%</span>
<span id="t83" class="t" style="left:1108px;padding-left:0.28px;top:824.69px;font-size:16.9px;color:#181b2c;transform:scaleX(1.1095);transform-origin:1.60px 50%;-webkit-text-stroke:0.35px #181b2c;">None</span>
<span id="t84" class="t" style="left:1109px;padding-left:0.26px;top:851.56px;font-size:20.6px;color:#181b2c;transform:scaleX(1.0723);transform-origin:0.90px 50%;-webkit-text-stroke:0.45px #181b2c;">5</span>
<span id="t85" class="t" style="left:1126px;padding-left:0.89px;top:930.16px;font-size:12.9px;color:#262626;transform:scaleX(1.0116);transform-origin:1.90px 50%;-webkit-text-stroke:0.15px #262626;">Null</span>
<span id="t86" class="t" style="left:1398px;padding-left:0.99px;top:930.16px;font-size:12.9px;color:#262626;transform:scaleX(1.0914);transform-origin:1.60px 50%;-webkit-text-stroke:0.15px #262626;">60%</span>
<span id="t87" class="t" style="left:1126px;padding-left:0.89px;top:959.16px;font-size:12.9px;color:#262626;transform:scaleX(1.0113);transform-origin:1.90px 50%;-webkit-text-stroke:0.15px #262626;">Reason 2</span>
<span id="t88" class="t" style="left:1400px;padding-left:0.90px;top:959.16px;font-size:12.9px;color:#262626;transform:scaleX(1.1057);transform-origin:1.10px 50%;-webkit-text-stroke:0.15px #262626;">40%</span>
</body></html>
